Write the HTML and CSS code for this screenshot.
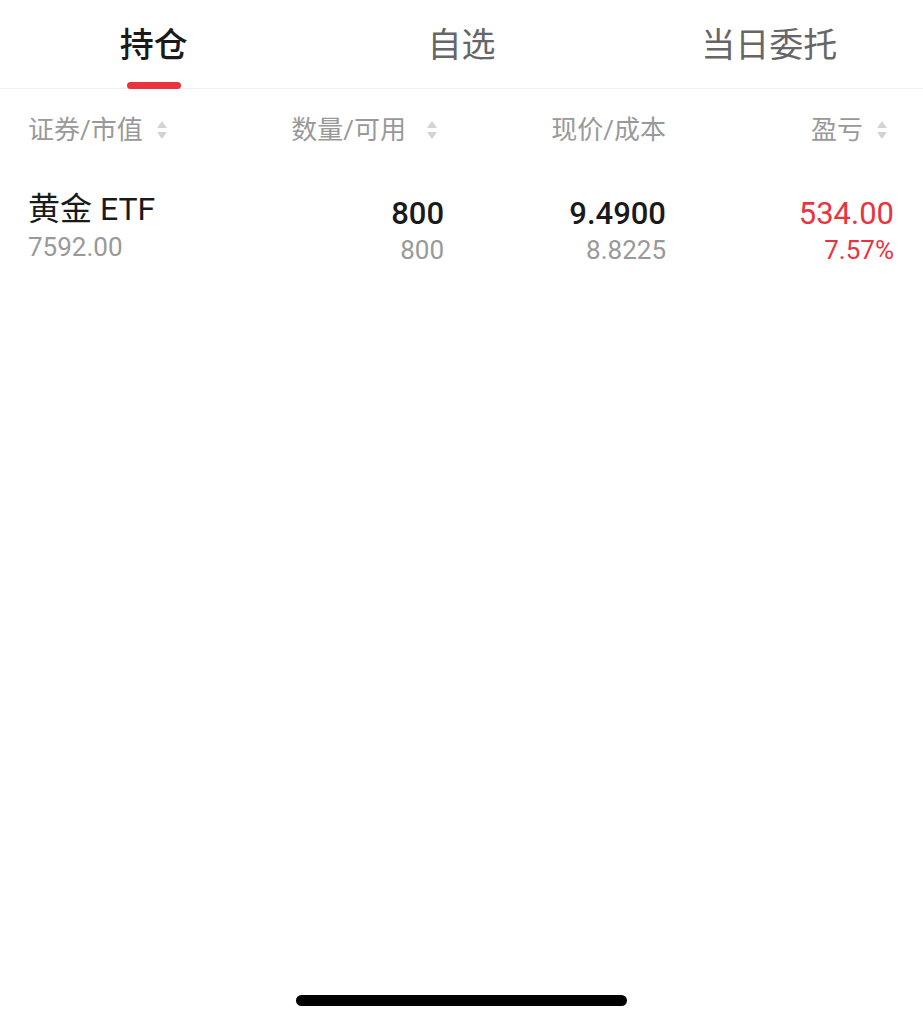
FILE: index.html
```html
<!DOCTYPE html>
<html lang="zh-CN">
<head>
    <meta charset="UTF-8">
    <meta name="viewport" content="width=device-width, initial-scale=1.0">
    <title>持仓</title>
    <link rel="stylesheet" href="styles.css">
</head>
<body>

    <!-- Tabs -->
    <nav class="tabs">
        <div class="tab active">
            <span class="tab-label">持仓</span>
            <span class="tab-line"></span>
        </div>
        <div class="tab">
            <span class="tab-label">自选</span>
        </div>
        <div class="tab">
            <span class="tab-label">当日委托</span>
        </div>
    </nav>

    <!-- Tabellenkopf -->
    <div class="grid head">
        <div class="cell left">证券/市值<span class="sort"></span></div>
        <div class="cell right">数量/可用<span class="sort wide"></span></div>
        <div class="cell right">现价/成本</div>
        <div class="cell right">盈亏<span class="sort"></span></div>
    </div>

    <!-- Positionen -->
    <div class="grid row">
        <div class="cell left">
            <span class="name">黄金 ETF</span>
            <span class="sub">7592.00</span>
        </div>
        <div class="cell right">
            <span class="main bold">800</span>
            <span class="sub">800</span>
        </div>
        <div class="cell right">
            <span class="main bold">9.4900</span>
            <span class="sub">8.8225</span>
        </div>
        <div class="cell right up">
            <span class="main">534.00</span>
            <span class="sub">7.57%</span>
        </div>
    </div>

    <div class="home-bar"></div>

</body>
</html>
```

FILE: styles.css
```css
body {
    font-family: Roboto, "Noto Sans CJK SC", sans-serif;
    background-color: #ffffff;
    margin: 0;
    padding: 0;
    height: 1024px;
    position: relative;
    overflow: hidden;
}
.tabs {
    display: grid;
    grid-template-columns: 1fr 1fr 1fr;
    height: 88px;
    border-bottom: 1px solid #f0f0f0;
}
.tab {
    display: flex;
    flex-direction: column;
    align-items: center;
    padding-top: 28px;
}
.tab-label {
    font-size: 34px;
    line-height: 34px;
    color: #666666;
}
.tab.active .tab-label {
    color: #1a1a1a;
    font-weight: 500;
}
.tab-line {
    width: 54px;
    height: 7px;
    margin-top: 20px;
    border-radius: 4px;
    background-color: #e8343f;
}
.grid {
    display: grid;
    grid-template-columns: 194px 222px 222px 228px;
    padding: 0 29px 0 28px;
}
.head {
    padding-top: 28px;
    font-size: 26px;
    line-height: 26px;
    color: #999999;
}
.cell {
    display: flex;
    align-items: center;
}
.cell.right {
    justify-content: flex-end;
}
.head .cell.right {
    padding-right: 7px;
}
.head .cell.right:nth-child(3) {
    padding-right: 0;
}
.sort {
    display: inline-flex;
    flex-direction: column;
    gap: 4px;
    margin-left: 14px;
}
.sort.wide {
    margin-left: 21px;
}
.sort::before,
.sort::after {
    content: "";
    width: 0;
    height: 0;
    border-left: 5px solid transparent;
    border-right: 5px solid transparent;
}
.sort::before {
    border-bottom: 7px solid #d3d3d3;
}
.sort::after {
    border-top: 7px solid #d3d3d3;
}
.row {
    padding-top: 53px;
}
.row .cell {
    flex-direction: column;
    align-items: flex-start;
}
.row .cell.right {
    align-items: flex-end;
}
.name {
    font-size: 32px;
    line-height: 30px;
    margin-top: -2px;
    color: #1a1a1a;
}
.main {
    font-size: 31px;
    line-height: 36px;
    color: #1a1a1a;
}
.main.bold {
    font-weight: 500;
}
.sub {
    font-size: 26px;
    line-height: 31px;
    margin-top: 3px;
    color: #999999;
}
.row .left .sub {
    margin-top: 8px;
}
.up .main,
.up .sub {
    color: #e8343f;
}
.home-bar {
    position: absolute;
    left: 296px;
    top: 995px;
    width: 331px;
    height: 11px;
    border-radius: 6px;
    background-color: #000000;
}
```
